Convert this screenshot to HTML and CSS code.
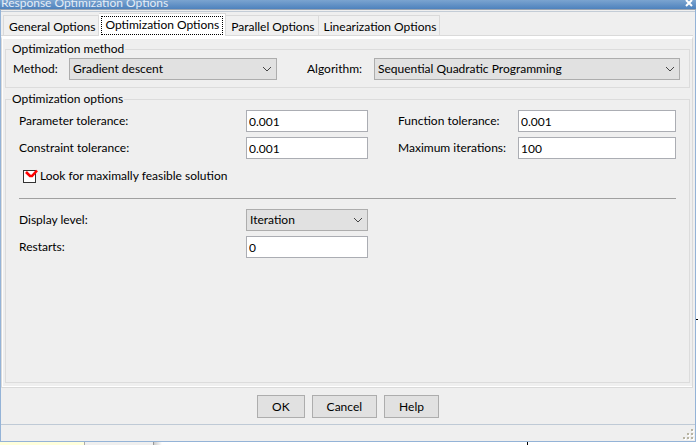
FILE: index.html
```html
<!DOCTYPE html>
<html lang="en">
<head>
<meta charset="utf-8">
<title>Response Optimization Options</title>
<link rel="stylesheet" href="styles.css">
</head>
<body>
<div class="desktop">
  <main class="window">
    <header class="titlebar">
      <h1 class="title">Response Optimization Options</h1>
      <button class="close" type="button" aria-label="Close"><svg width="8" height="8" viewBox="0 0 8 8"><path d="M1 0L7 6M7 0L1 6" stroke="#fff" stroke-width="2"/></svg></button>
    </header>
    <form class="body">
      <nav class="tabs" role="tablist">
        <button class="tab" type="button" role="tab">General Options</button>
        <button class="tab tab-active" type="button" role="tab" aria-selected="true"><span class="focus">Optimization Options</span></button>
        <button class="tab" type="button" role="tab">Parallel Options</button>
        <button class="tab" type="button" role="tab">Linearization Options</button>
      </nav>
      <section class="panel">
        <fieldset class="group">
          <legend>Optimization method</legend>
          <div class="method-row">
            <label for="method">Method:</label>
            <div class="combo"><select id="method"><option>Gradient descent</option></select><svg class="chevron" viewBox="0 0 10 6"><path d="M1 1L5 5L9 1"/></svg></div>
            <label class="second" for="algorithm">Algorithm:</label>
            <div class="combo"><select id="algorithm"><option>Sequential Quadratic Programming</option></select><svg class="chevron" viewBox="0 0 10 6"><path d="M1 1L5 5L9 1"/></svg></div>
          </div>
        </fieldset>
        <fieldset class="group group-options">
          <legend>Optimization options</legend>
          <div class="options">
            <div class="fields">
              <label for="ptol">Parameter tolerance:</label>
              <input class="text" id="ptol" type="text" value="0.001">
              <label class="second" for="ftol">Function tolerance:</label>
              <input class="text" id="ftol" type="text" value="0.001">
              <label for="ctol">Constraint tolerance:</label>
              <input class="text" id="ctol" type="text" value="0.001">
              <label class="second" for="iters">Maximum iterations:</label>
              <input class="text" id="iters" type="text" value="100">
            </div>
            <div class="check-row">
              <span class="check"><input id="feasible" type="checkbox" checked><svg class="tick" width="16" height="14" viewBox="0 0 16 14"><path d="M3 3L7 7L9 7L14 1.5" fill="none" stroke="#f00" stroke-width="2.6"/></svg></span>
              <label for="feasible">Look for maximally feasible solution</label>
            </div>
            <hr>
            <div class="fields">
              <label for="display">Display level:</label>
              <div class="combo"><select id="display"><option>Iteration</option></select><svg class="chevron" viewBox="0 0 10 6"><path d="M1 1L5 5L9 1"/></svg></div>
              <label class="row-start" for="restarts">Restarts:</label>
              <input class="text" id="restarts" type="text" value="0">
            </div>
          </div>
        </fieldset>
      </section>
      <div class="actions">
        <button class="btn" type="button">OK</button>
        <button class="btn" type="button">Cancel</button>
        <button class="btn" type="button">Help</button>
      </div>
    </form>
    <footer class="status">
      <svg width="11" height="11" viewBox="0 0 11 11"><path fill="#fff" d="M9 1h2v2h-2zM5 5h2v2h-2zM9 5h2v2h-2zM1 9h2v2h-2zM5 9h2v2h-2zM9 9h2v2h-2z"/><path fill="#b8b4a2" d="M8 0h2v2h-2zM4 4h2v2h-2zM8 4h2v2h-2zM0 8h2v2h-2zM4 8h2v2h-2zM8 8h2v2h-2z"/></svg>
    </footer>
  </main>
  <div class="edge"></div>
  <div class="backdrop"><span class="note"></span><span class="side"></span><span class="canvas"></span></div>
</div>
</body>
</html>
```
FILE: styles.css
```css
* {
  box-sizing: border-box;
}

body {
  margin: 0;
  background: #fff;
  color: #000;
  font: 12px/16px Lato, "Open Sans", sans-serif;
}

button,
input,
select {
  margin: 0;
  font: inherit;
  color: inherit;
}

.desktop {
  display: grid;
  grid-template-columns: 1fr 2px;
  grid-template-rows: 1fr 3px;
  height: 100vh;
  overflow: hidden;
}

.window {
  display: flex;
  flex-direction: column;
  min-width: 0;
  border: 1px solid #94b3d7;
  border-top: 0;
  background: #efefef;
}

.titlebar {
  display: flex;
  align-items: flex-end;
  justify-content: space-between;
  height: 10px;
  margin: 0 -1px;
  padding: 0 3px 0 1px;
  border-bottom: 1px solid #9ba5b1;
  background: linear-gradient(#7ba4d0, #4e82bd);
}

.title {
  margin: 0;
  color: #e4edf7;
  font-size: 12px;
  font-weight: 400;
  line-height: 12px;
}

.close {
  display: flex;
  height: 9px;
  padding: 0;
  border: 0;
  background: none;
}

.body {
  display: flex;
  flex: 1;
  flex-direction: column;
  margin-top: 1px;
  border-top: 1px solid #c3ccd6;
}

.tabs {
  display: flex;
  align-items: flex-end;
  height: 24px;
  margin-right: 2px;
  padding: 1px 2px 0;
  box-shadow: inset 0 -1px #dadada;
}

.tab {
  height: 21px;
  padding: 2px 3px 0 5px;
  border: 1px solid #dadada;
  border-left: 0;
  background: #f0f0f0;
  line-height: 16px;
  white-space: nowrap;
}

.tab:first-child {
  border-left: 1px solid #dadada;
}

.tab-active {
  height: 23px;
  padding: 2px;
  border-bottom: 0;
  background: #fff;
}

.focus {
  display: block;
  height: 19px;
  padding: 0 3px;
  border: 1px dotted #000;
}

.panel {
  display: flex;
  flex: 1;
  flex-direction: column;
  gap: 3px;
  margin-right: 2px;
  padding: 2px 2px 4px 3px;
  border: 1px solid #dadada;
  border-top: 3px solid #fff;
  box-shadow: inset 1px -1px #fff;
}

.group {
  min-width: 0;
  margin: 0;
  padding: 1px 9px 7px 7px;
  border: 1px solid #dcdcdc;
}

.group-options {
  flex: 1;
}

.group legend {
  margin-left: -2px;
  padding: 0 1px;
}

.method-row {
  display: grid;
  grid-template-columns: 56px 208fr 97px 306fr;
  align-items: center;
}

.second {
  padding-left: 30px;
}

.combo {
  position: relative;
}

.combo select {
  display: block;
  width: 100%;
  height: 22px;
  padding: 0 20px 0 3px;
  appearance: none;
  border: 1px solid #adadad;
  border-radius: 0;
  background: #e1e1e1;
}

.chevron {
  position: absolute;
  top: 8px;
  right: 5px;
  width: 10px;
  height: 6px;
  fill: none;
  stroke: #444;
  pointer-events: none;
}

.options {
  padding: 2px 4px 0 6px;
}

.fields {
  display: grid;
  grid-template-columns: 227px 122px 150px 1fr;
  row-gap: 5px;
  align-items: center;
}

.row-start {
  grid-column: 1;
}

.text {
  width: 100%;
  height: 22px;
  padding: 0 2px;
  border: 1px solid #abadb3;
  border-radius: 0;
  background: #fff;
}

.check-row {
  display: flex;
  gap: 4px;
  align-items: center;
  padding: 9px 4px 10px;
}

.check {
  position: relative;
  display: flex;
}

.check input {
  width: 13px;
  height: 13px;
  appearance: none;
  border: 1px solid #333;
  background: #fff;
}

.tick {
  position: absolute;
  top: -1px;
  left: 0;
  pointer-events: none;
}

hr {
  height: 1px;
  margin: 4px 0 10px;
  border: 0;
  background: #a0a0a0;
}

.actions {
  display: flex;
  gap: 7px;
  justify-content: center;
  padding: 7px 0 6px;
}

.btn {
  height: 23px;
  padding: 0 14px;
  border: 1px solid #adadad;
  border-radius: 0;
  background: #e1e1e1;
}

.status {
  display: flex;
  align-items: flex-end;
  justify-content: flex-end;
  height: 17px;
  padding: 0 1px 1px;
  border-top: 1px solid #bfcad6;
}

.edge::before {
  display: block;
  height: 1px;
  margin-top: 319px;
  background: #000;
  content: "";
}

.backdrop {
  display: flex;
  grid-column: 1 / -1;
}

.note {
  width: 85px;
  border-right: 1px solid #aaa;
  background: #ffffdc;
}

.side {
  width: 69px;
  border-right: 1px solid #999;
  background: #efefef;
}

.canvas {
  width: 374px;
  border-right: 1px solid #000;
  background: linear-gradient(90deg, #ccc, #fff 8px);
}
```
